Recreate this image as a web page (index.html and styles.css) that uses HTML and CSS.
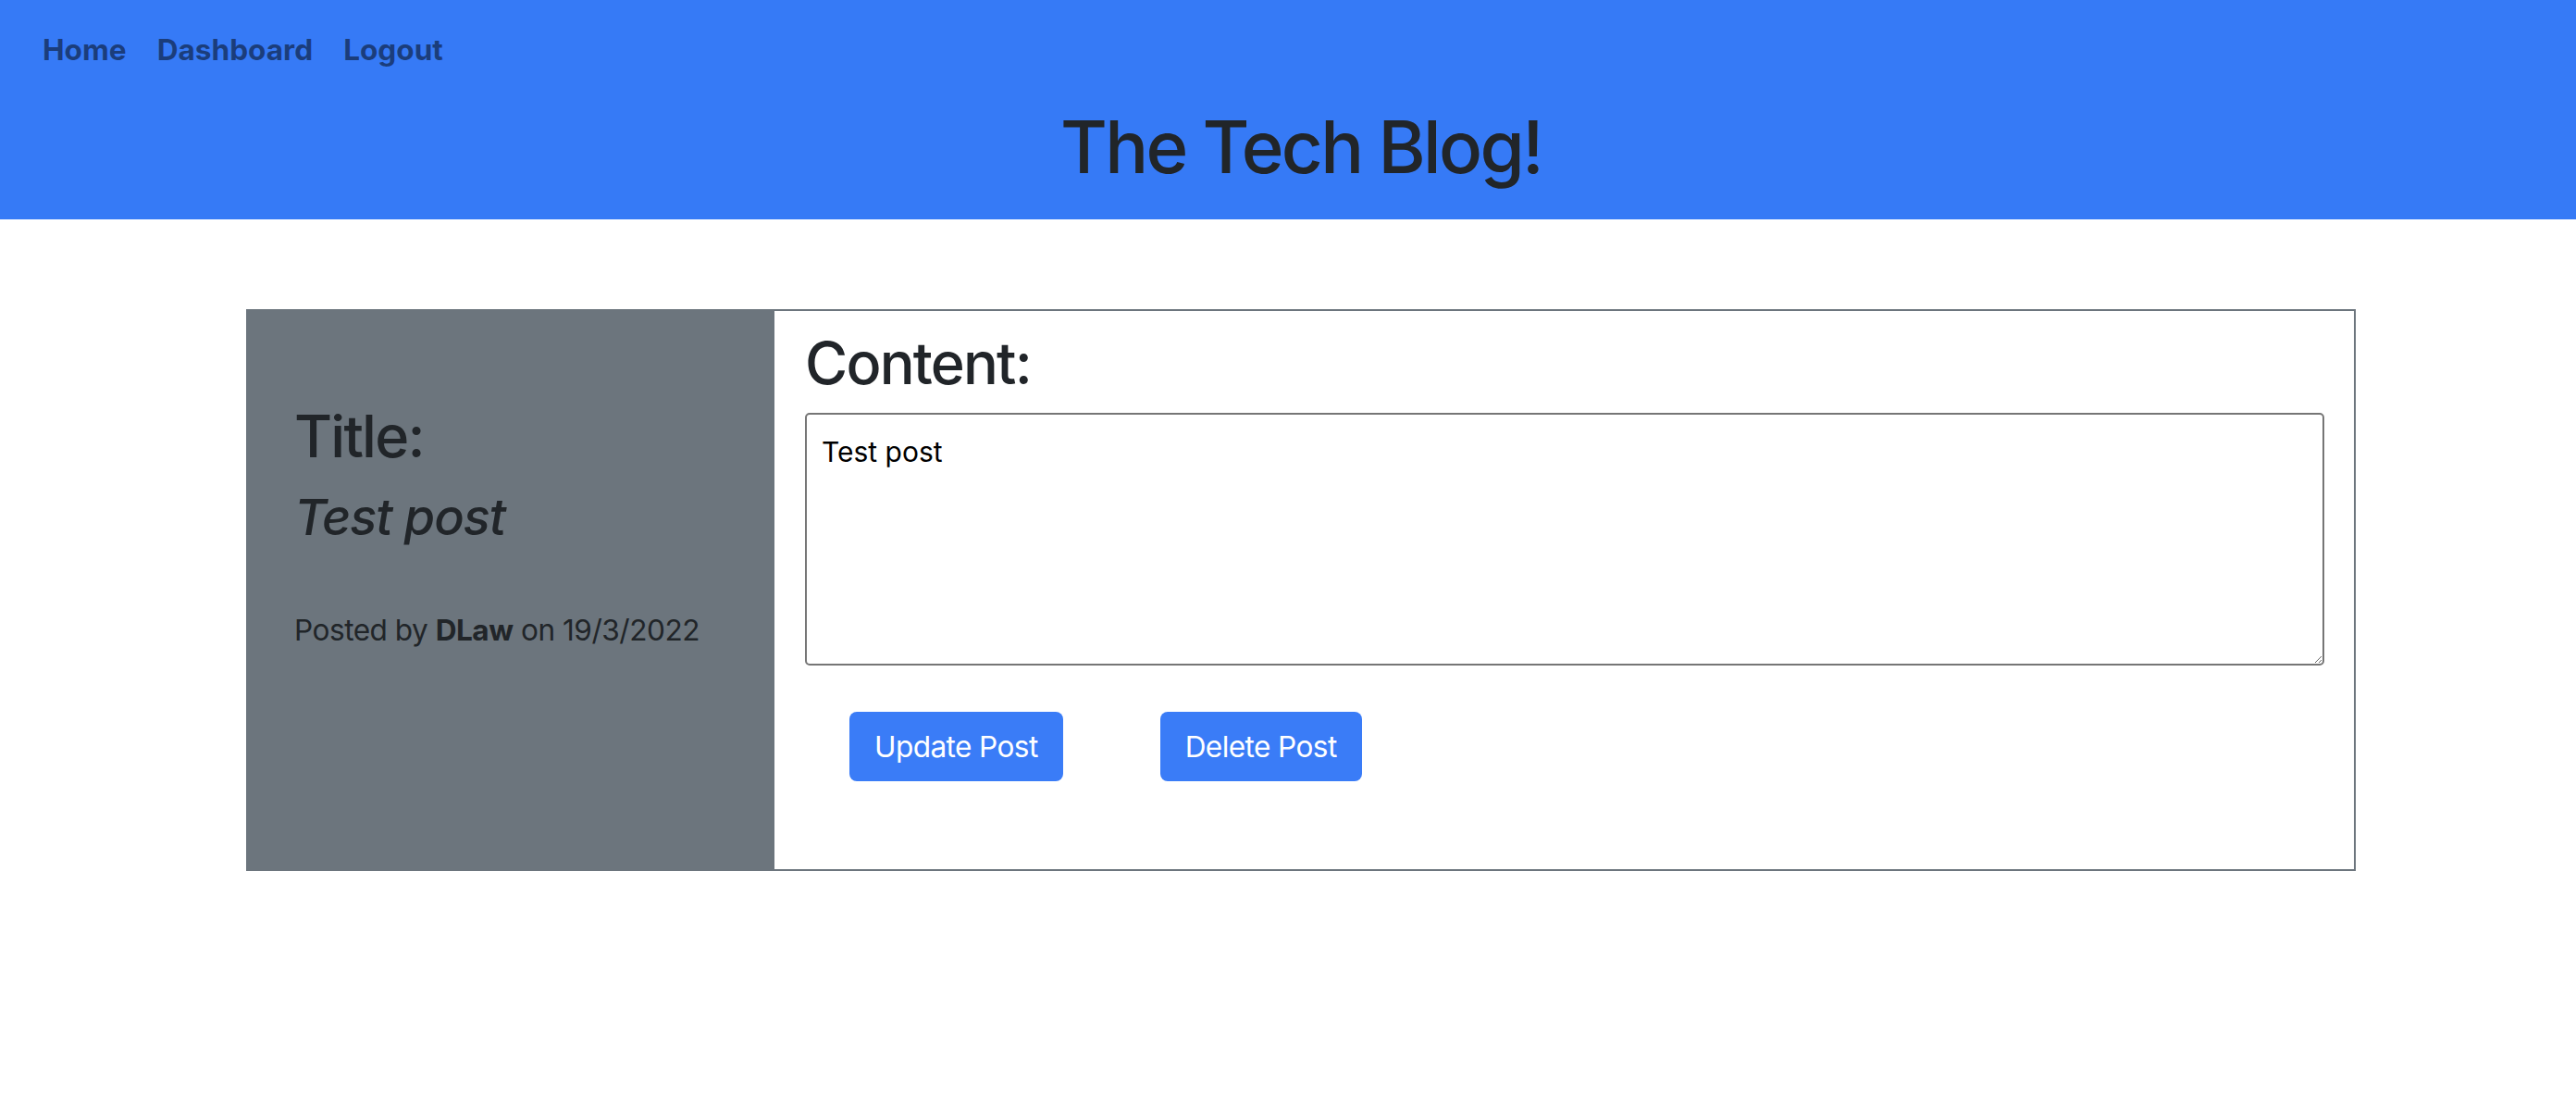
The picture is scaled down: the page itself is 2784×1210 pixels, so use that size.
FILE: index.html
```html
<!DOCTYPE html>
<html lang="en">
<head>
<meta charset="utf-8">
<title>The Tech Blog!</title>
<link rel="stylesheet" href="styles.css">
</head>
<body>
<header class="site-header">
  <nav class="nav">
    <a class="nav-link" href="#">Home</a>
    <a class="nav-link" href="#">Dashboard</a>
    <a class="nav-link" href="#">Logout</a>
  </nav>
  <h1 class="site-title">The Tech Blog!</h1>
</header>
<main class="main">
  <section class="post-card">
    <div class="post-meta">
      <h2 class="meta-heading">Title:</h2>
      <h3 class="post-title">Test post</h3>
      <p class="posted-by">Posted by <strong>DLaw</strong> on 19/3/2022</p>
    </div>
    <div class="post-body">
      <h2 class="content-heading">Content:</h2>
      <textarea class="content-input">Test post</textarea>
      <div class="actions">
        <button class="btn" type="button">Update Post</button>
        <button class="btn" type="button">Delete Post</button>
      </div>
    </div>
  </section>
</main>
</body>
</html>
```
FILE: styles.css
```css
* { box-sizing: border-box; }
html, body { margin: 0; padding: 0; }
body {
  font-family: Inter, "Noto Sans", "Liberation Sans", sans-serif;
  color: #212529;
  background: #ffffff;
  width: 2784px;
}
.site-header {
  background: #367af6;
  padding: 30px 0 31px;
  height: 237px;
}
.nav {
  display: flex;
  gap: 33px;
  padding-left: 46px;
  height: 48px;
}
.nav-link {
  font-size: 31.6px;
  font-weight: 700;
  line-height: 48px;
  color: rgba(0, 0, 0, 0.5);
  text-decoration: none;
}
.site-title {
  margin: 34px 0 0;
  padding-left: 28px;
  text-align: center;
  font-size: 78px;
  font-weight: 500;
  line-height: 94px;
  letter-spacing: -2.7px;
  color: #212529;
}
.main {
  padding-top: 97px;
  padding-left: 266px;
}
.post-card {
  display: flex;
  width: 2280px;
  height: 607px;
  border: 2px solid #6c757d;
}
.post-meta {
  width: 569px;
  flex: none;
  background: #6c757d;
  padding: 97px 20px 0 50px;
}
.meta-heading {
  margin: 0;
  font-size: 63px;
  font-weight: 500;
  line-height: 76px;
  letter-spacing: -1.8px;
}
.post-title {
  margin: 17px 0 0;
  font-size: 54px;
  font-weight: 500;
  font-style: italic;
  line-height: 65px;
  letter-spacing: -1.1px;
}
.posted-by {
  margin: 66px 0 0;
  font-size: 31.6px;
  line-height: 48px;
  font-weight: 400;
  letter-spacing: -0.5px;
}
.posted-by strong { font-weight: 700; }
.post-body {
  flex: 1;
  display: flex;
  flex-direction: column;
  padding: 18px 32px 0 33px;
}
.content-heading {
  margin: 0 0 16px;
  font-size: 63px;
  font-weight: 500;
  line-height: 76px;
  letter-spacing: -1.8px;
}
.content-input {
  display: block;
  width: 100%;
  height: 273px;
  border: 2px solid #767676;
  border-radius: 5px;
  padding: 22px 16px;
  font-family: Inter, "Noto Sans", "Liberation Sans", sans-serif;
  font-size: 30px;
  line-height: 36px;
  color: #000000;
  background: #ffffff;
  resize: vertical;
}
.actions {
  display: flex;
  gap: 105px;
  margin-top: 50px;
  padding-left: 48px;
}
.btn {
  background: #3a7cf7;
  color: #ffffff;
  border: 0;
  border-radius: 8px;
  padding: 15px 27px;
  font-family: Inter, "Noto Sans", "Liberation Sans", sans-serif;
  font-size: 31.6px;
  line-height: 45px;
  font-weight: 400;
  letter-spacing: -0.6px;
  cursor: pointer;
}
```
